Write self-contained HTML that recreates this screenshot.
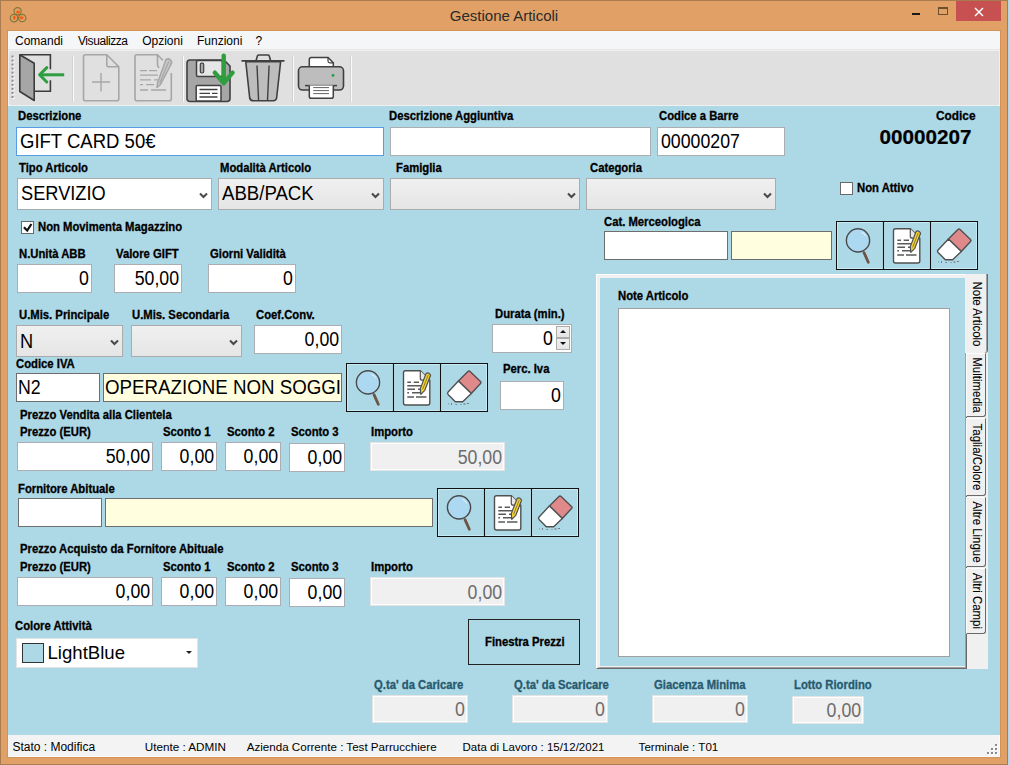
<!DOCTYPE html>
<html><head><meta charset="utf-8">
<style>
*{margin:0;padding:0;box-sizing:border-box}
html,body{width:1009px;height:765px;overflow:hidden;background:#B0D8EA;font-family:"Liberation Sans",sans-serif}
.a{position:absolute}
.frame{position:absolute;left:0;top:0;width:1008px;height:765px;background:#E0A066;border:1px solid #A97B50}
.title{position:absolute;left:0;top:7.2px;width:1008px;text-align:center;font-size:15px;color:#2b2b2b;line-height:18px}
.client{position:absolute;left:8px;top:31px;width:992px;height:726px;background:#ADD8E6}
.menubar{position:absolute;left:8px;top:31px;width:992px;height:19px;background:#F5F6F7;border-bottom:1px solid #E6E7E9}
.menubar span{position:absolute;top:0px;font-size:12px;line-height:12px;color:#000;top:3.6px}
.toolbar{position:absolute;left:8px;top:50px;width:992px;height:56px;background:#F0F0F0}
.tb{position:absolute;left:1px;top:1px;width:990px;height:54px;background:#E0E0E0;border-radius:3px 0 0 3px}
.sep{position:absolute;top:56px;width:1px;height:45px;background:#fff;border-left:1px solid #C8C8C8}
.lbl{position:absolute;font-weight:bold;font-size:12px;line-height:11.2px;white-space:nowrap;color:#000;transform:scaleX(0.94);transform-origin:0 0;-webkit-text-stroke:0.3px #000}
.teal{-webkit-text-stroke:0.3px #285A6E}
.in{position:absolute;background:#fff;border:1px solid #ABADB3;font-size:18px;line-height:18px;white-space:nowrap;overflow:hidden;color:#000}
.in span{position:absolute;top:4.3px;font-size:19.6px;transform:scaleX(0.905)}
.in .r{right:2px;transform-origin:100% 50%}
.in .l{left:3px;transform-origin:0 50%}
.yl{background:#FFFFE0}
.dis{background:#F0F0F0;border:1px solid #E4E4E4;box-shadow:inset 0 0 0 1px #fff;color:#6D6D6D}
.cb{position:absolute;background:#fff;border:1px solid #ABABAB;font-size:18px;line-height:18px;white-space:nowrap}
.cbg{background:linear-gradient(#F0F0F0,#E5E5E5)}
.cb span{position:absolute;left:3px;top:6px}
.chev{position:absolute;right:3px;top:12.6px;width:9px;height:7px}
.btn3{position:absolute;border:1px solid #1a1a1a;height:49px}
.btn3 .d{position:absolute;top:0;width:1px;height:47px;background:#1a1a1a}
.chk{position:absolute;width:13px;height:13px;background:#fff;border:1px solid #6A6A6A}
.status{position:absolute;left:8px;top:735px;width:992px;height:22px;background:#F3F3F3;border-right:1px solid #FAFCFE;border-bottom:1px solid #FAFCFE}
.status span{position:absolute;top:6.1px;font-size:11.6px;line-height:12px;color:#000;white-space:nowrap}
.teal{color:#285A6E}
.tab{position:absolute;background:#F0F0F0;border-top:1px solid #fff;border-right:1px solid #696969;border-bottom:1px solid #696969;border-left:1px solid #fff;border-radius:0 0 3px 0}
.tab span{position:absolute;left:50%;top:50%;transform:translate(-50%,-50%) translate(1px,0) rotate(90deg) scaleX(0.88);font-size:13px;line-height:12px;white-space:nowrap;color:#000;-webkit-text-stroke:0.1px #000}
.act{border-left:none;border-top:none;border-right:1px solid #696969;box-shadow:inset -1px 0 0 #A0A0A0;border-bottom:none}
</style></head><body>
<div class="frame"></div>
<svg width="0" height="0" style="position:absolute">
 <defs>
  <g id="bgrp">
   <rect x="0.5" y="0.5" width="141" height="48" fill="none" stroke="#111" stroke-width="1"/>
   <rect x="1.5" y="1.5" width="45.5" height="46" fill="none" stroke="#C6EAF3" stroke-width="1"/>
   <rect x="48.5" y="1.5" width="45" height="46" fill="none" stroke="#C6EAF3" stroke-width="1"/>
   <rect x="95.5" y="1.5" width="45" height="46" fill="none" stroke="#C6EAF3" stroke-width="1"/>
   <path d="M47.5 0V49M94.5 0V49" stroke="#111" stroke-width="1.2"/>
   <!-- magnifier -->
   <path d="M28 31.6L32.3 41.2" stroke="#6E5444" stroke-width="2.8" stroke-linecap="round"/>
   <circle cx="22" cy="19.4" r="11.6" fill="#ACD8F2" stroke="#4A4A4A" stroke-width="1.4"/>
   <path d="M25.5 11.2Q28.5 12.5 29.8 15.2" fill="none" stroke="#fff" stroke-width="1" opacity="0.8"/>
   <!-- doc -->
   <path d="M59.5 7.7H74.3L83.8 17.2V40Q83.8 42 81.8 42H59.5Q57.5 42 57.5 40V9.7Q57.5 7.7 59.5 7.7Z" fill="#fff" stroke="#505050" stroke-width="1.4"/>
   <path d="M74.3 7.7V15.2Q74.3 17.2 76.3 17.2H83.8" fill="#E8E8E8" stroke="#505050" stroke-width="1.2"/>
   <path d="M61.3 19.2H65M67.7 19.2H73M61.3 22.8H76M61.3 26.3H69M72 26.3H76M61.3 29.8H63M66 29.8H75M61.3 34H68M70 34H80.5" stroke="#5A5A5A" stroke-width="1.4"/>
   <path d="M80 10.7Q82.6 8.6 84.6 12.3L78.8 27.3L74.8 31.4L74.3 25.6Z" fill="#F2D23A" stroke="#505050" stroke-width="1.2" stroke-linejoin="round"/>
   <path d="M82.3 11.8L76.6 26.4" stroke="#7A6A30" stroke-width="0.8"/>
   <!-- eraser -->
   <path d="M17.9 17.9L27.4 8.6Q28.5 7.6 29.6 8.6L40 18.4Q41.1 19.5 40 20.6L30.8 30.4Z" transform="translate(94.5,0)" fill="#E0898A" stroke="#505050" stroke-width="1.4" stroke-linejoin="round"/>
   <path d="M17.9 17.9L30.8 30.4L22.2 38.7H14.8L7.6 31.4Q6.5 30.2 7.6 29Z" transform="translate(94.5,0)" fill="#fff" stroke="#505050" stroke-width="1.4" stroke-linejoin="round"/>
   <g fill="#666" transform="translate(94.5,0)"><rect x="7.5" y="40.5" width="0.8" height="0.8"/><rect x="10.5" y="40.2" width="1" height="1.5"/><rect x="15" y="41" width="1.5" height="0.8"/><rect x="20" y="41" width="1" height="0.8"/><rect x="23" y="40.5" width="2" height="1"/><rect x="26.5" y="40" width="2" height="0.8"/></g>
  </g>
 </defs>
</svg>
<div class="title">Gestione Articoli</div>
<!-- app icon -->
<svg class="a" style="left:0;top:0" width="30" height="28" viewBox="0 0 30 28">
 <g fill="none" stroke="#7D7A3C" stroke-width="1.2"><circle cx="17.6" cy="11.3" r="3.6"/><circle cx="14" cy="18.1" r="3.7"/><circle cx="22.2" cy="18" r="3.7"/></g>
 <g fill="#F06018"><ellipse cx="18" cy="12" rx="2" ry="1.6"/><ellipse cx="14.3" cy="17.8" rx="1.4" ry="2"/><ellipse cx="21.5" cy="17.8" rx="2" ry="1.5"/><circle cx="17.8" cy="16" r="1"/></g>
</svg>
<!-- window buttons -->
<div class="a" style="left:912px;top:13px;width:8px;height:2px;background:#1a1a1a"></div>
<div class="a" style="left:938px;top:7px;width:10px;height:8px;border:1px solid #6b5030;border-top:2px solid #6b5030"></div>
<div class="a" style="left:956px;top:1px;width:45px;height:20px;background:#C75050"></div>
<svg class="a" style="left:973px;top:5.5px" width="12" height="12" viewBox="0 0 12 12"><path d="M2 2L10 10M10 2L2 10" stroke="#fff" stroke-width="1.5"/></svg>

<div class="a" style="left:7px;top:30px;width:994px;height:728px;background:#D39358"></div>
<div class="client"></div>
<div class="menubar">
 <span style="left:7px">Comandi</span>
 <span style="left:70px;letter-spacing:-0.42px">Visualizza</span>
 <span style="left:134.2px">Opzioni</span>
 <span style="left:189px">Funzioni</span>
 <span style="left:247.6px">?</span>
</div>
<div class="toolbar"><div class="tb"></div></div>
<svg class="a" style="left:0;top:0" width="1009" height="110" viewBox="0 0 1009 110">
 <!-- grip -->
 <g><rect x="12.5" y="56.50" width="2" height="2" fill="#fff"/><rect x="11.5" y="55.50" width="2" height="2" fill="#8E8E8E"/><rect x="12.5" y="60.55" width="2" height="2" fill="#fff"/><rect x="11.5" y="59.55" width="2" height="2" fill="#8E8E8E"/><rect x="12.5" y="64.60" width="2" height="2" fill="#fff"/><rect x="11.5" y="63.60" width="2" height="2" fill="#8E8E8E"/><rect x="12.5" y="68.65" width="2" height="2" fill="#fff"/><rect x="11.5" y="67.65" width="2" height="2" fill="#8E8E8E"/><rect x="12.5" y="72.70" width="2" height="2" fill="#fff"/><rect x="11.5" y="71.70" width="2" height="2" fill="#8E8E8E"/><rect x="12.5" y="76.75" width="2" height="2" fill="#fff"/><rect x="11.5" y="75.75" width="2" height="2" fill="#8E8E8E"/><rect x="12.5" y="80.80" width="2" height="2" fill="#fff"/><rect x="11.5" y="79.80" width="2" height="2" fill="#8E8E8E"/><rect x="12.5" y="84.85" width="2" height="2" fill="#fff"/><rect x="11.5" y="83.85" width="2" height="2" fill="#8E8E8E"/><rect x="12.5" y="88.90" width="2" height="2" fill="#fff"/><rect x="11.5" y="87.90" width="2" height="2" fill="#8E8E8E"/><rect x="12.5" y="92.95" width="2" height="2" fill="#fff"/><rect x="11.5" y="91.95" width="2" height="2" fill="#8E8E8E"/><rect x="12.5" y="97.00" width="2" height="2" fill="#fff"/><rect x="11.5" y="96.00" width="2" height="2" fill="#8E8E8E"/></g>
 <!-- separators -->
 <g fill="#FAFAFA"><rect x="73" y="56" width="1" height="46"/><rect x="183" y="56" width="1" height="46"/><rect x="293" y="56" width="1" height="46"/><rect x="351" y="56" width="1" height="46"/></g><g fill="#D2D2D2"><rect x="72" y="56" width="1" height="46"/><rect x="182" y="56" width="1" height="46"/><rect x="292" y="56" width="1" height="46"/><rect x="350" y="56" width="1" height="46"/></g>
 <!-- door -->
 <path d="M19.8 54.8H50.4V69.2M50.4 80.2V91.3H34" fill="none" stroke="#3C3C3C" stroke-width="1.6"/>
 <path d="M19.8 54.8L34.2 63.2V100.5L19.8 91.5Z" fill="#A6A6A6" stroke="#3C3C3C" stroke-width="1.6" stroke-linejoin="round"/>
 <path d="M40 74.8H64.2" fill="none" stroke="#2E9E3E" stroke-width="3"/>
 <path d="M46.8 67.6L39.6 74.8L46.8 82" fill="none" stroke="#2E9E3E" stroke-width="3" stroke-linecap="round" stroke-linejoin="round"/>
 <!-- new doc -->
 <path d="M85.5 54.8H106.8L118.8 66.8V98.8Q118.8 100.8 116.8 100.8H85.5Q83.5 100.8 83.5 98.8V56.8Q83.5 54.8 85.5 54.8Z" fill="none" stroke="#A6A6A6" stroke-width="1.6"/>
 <path d="M106.8 54.8V64.8Q106.8 66.8 108.8 66.8H118.8" fill="none" stroke="#A6A6A6" stroke-width="1.6"/>
 <path d="M92 82H110M101 73V91.5" stroke="#A6A6A6" stroke-width="1.4"/>
 <!-- edit doc disabled -->
 <path d="M163 60.5L157.5 54.8H137Q135 54.8 135 56.8V98.8Q135 100.8 137 100.8H169.3Q171.3 100.8 171.3 98.8V73" fill="none" stroke="#A6A6A6" stroke-width="1.6"/>
 <path d="M157.5 54.8V64.5Q157.5 66 159 68" fill="none" stroke="#A6A6A6" stroke-width="1.6"/>
 <path d="M140 70.6H147M149 70.6H157M140 75.2H158M140 79.9H151M154 79.9H158M140 84.6H143M146 84.6H154M140 90H148M151 90H166" stroke="#A6A6A6" stroke-width="1.3"/>
 <path d="M166 59.5Q168.5 58 170.5 60Q172.5 62 171 64.5L160.5 84.5L157 87.5L157.5 83L166 59.5Z" fill="#C8C8C8" stroke="#A6A6A6" stroke-width="1.5" stroke-linejoin="round"/>
 <path d="M168.8 61.5L159.8 83" stroke="#A6A6A6" stroke-width="1.2"/>
 <!-- floppy -->
 <path d="M190 60H224L230 66V98.5Q230 101.5 227 101.5H190Q187 101.5 187 98.5V63Q187 60 190 60Z" fill="#A6A6A6" stroke="#404040" stroke-width="1.6"/>
 <rect x="196.5" y="60.5" width="26" height="16" rx="1.5" fill="#E6E6E6" stroke="#404040" stroke-width="1.5"/>
 <rect x="200.3" y="63.2" width="3.4" height="9.8" rx="1.5" fill="#A6A6A6" stroke="#404040" stroke-width="1.2"/>
 <rect x="196.2" y="85.5" width="24.8" height="15.5" rx="1" fill="#fff" stroke="#404040" stroke-width="1.5"/>
 <path d="M199.5 89.5H217.5M199.5 93.3H210M212 93.3H217.5M199.5 97H217.5" stroke="#404040" stroke-width="1.3"/>
 <path d="M223.7 55.6V82.5" stroke="#2E9E3E" stroke-width="4.4" stroke-linecap="round"/>
 <path d="M214.8 72.6L223.7 83.2L232.6 72.6" fill="none" stroke="#2E9E3E" stroke-width="4.4" stroke-linecap="round" stroke-linejoin="round"/>
 <!-- trash -->
 <path d="M245.8 61.8L249.7 98Q250.2 100.8 253.4 100.8H273.2Q276.2 100.8 276.6 98L280.6 61.8Z" fill="#BDBDBD" stroke="#404040" stroke-width="1.6" stroke-linejoin="round"/>
 <path d="M241.5 60.8H284.5" stroke="#404040" stroke-width="1.8"/>
 <path d="M256 60.8L257.5 55.8Q257.8 55 258.8 55H268Q269 55 269.2 55.8L270.6 60.8" fill="none" stroke="#404040" stroke-width="1.6"/>
 <path d="M257 65.5L258.6 100.5M269.1 65.5L267.5 100.5" stroke="#404040" stroke-width="1.4"/>
 <!-- printer -->
 <path d="M311.3 57.5H328L333.3 62.8V67H309.3V59.5Q309.3 57.5 311.3 57.5Z" fill="#fff" stroke="#404040" stroke-width="1.5"/>
 <path d="M328 57.5V61Q328 62.8 329.8 62.8H333.3" fill="none" stroke="#404040" stroke-width="1.2"/>
 <rect x="298.5" y="66.8" width="45" height="23.2" rx="4" fill="#BDBDBD" stroke="#404040" stroke-width="1.6"/>
 <path d="M305 85.6H337" stroke="#404040" stroke-width="1.5"/>
 <path d="M309.3 85.6V96.5Q309.3 98.3 311.3 98.3H331.3Q333.3 98.3 333.3 96.5V85.6" fill="#fff" stroke="#404040" stroke-width="1.5"/>
 <path d="M313.2 87.6H329M313.2 90.6H329M313.2 93.6H329" stroke="#505050" stroke-width="0.9"/>
 <circle cx="333" cy="75.4" r="1.4" fill="#1E9E3E"/>
</svg>

<!-- Row 1 -->
<div class="lbl" style="left:18px;top:110.5px">Descrizione</div>
<div class="in" style="left:16px;top:127px;width:368px;height:29px;border-color:#569DE5"><span class="l" style="transform:scaleX(0.945)">GIFT CARD 50€</span></div>
<div class="lbl" style="left:389px;top:110.5px">Descrizione Aggiuntiva</div>
<div class="in" style="left:390px;top:127px;width:261px;height:29px"></div>
<div class="lbl" style="left:659px;top:110.5px">Codice a Barre</div>
<div class="in" style="left:657px;top:127px;width:128px;height:29px"><span class="l">00000207</span></div>
<div class="lbl" style="left:936.3px;top:111.3px;font-size:12.6px;line-height:10.8px">Codice</div>
<div class="lbl" style="left:879.5px;top:127px;font-size:20.7px;line-height:20px;transform:none;-webkit-text-stroke:0.2px #000">00000207</div>

<!-- Row 2 -->
<div class="lbl" style="left:19px;top:162.5px">Tipo Articolo</div>
<div class="cb" style="left:17px;top:178px;width:195px;height:32px"><span style="font-size:19.6px;transform:scaleX(0.93);transform-origin:0 0;top:5.3px">SERVIZIO</span><svg class="chev" viewBox="0 0 9 7"><path d="M1 1.6L4.5 5.1L8 1.6" fill="none" stroke="#4A4A4A" stroke-width="2.1"/></svg></div>
<div class="lbl" style="left:220px;top:162.5px">Modalità Articolo</div>
<div class="cb cbg" style="left:218px;top:178px;width:166px;height:32px"><span style="font-size:19.6px;transform:scaleX(0.95);transform-origin:0 0;top:5.3px">ABB/PACK</span><svg class="chev" viewBox="0 0 9 7"><path d="M1 1.6L4.5 5.1L8 1.6" fill="none" stroke="#4A4A4A" stroke-width="2.1"/></svg></div>
<div class="lbl" style="left:396px;top:162.5px">Famiglia</div>
<div class="cb cbg" style="left:390px;top:178px;width:190px;height:32px"><svg class="chev" viewBox="0 0 9 7"><path d="M1 1.6L4.5 5.1L8 1.6" fill="none" stroke="#4A4A4A" stroke-width="2.1"/></svg></div>
<div class="lbl" style="left:590px;top:162.5px">Categoria</div>
<div class="cb cbg" style="left:586px;top:178px;width:190px;height:32px"><svg class="chev" viewBox="0 0 9 7"><path d="M1 1.6L4.5 5.1L8 1.6" fill="none" stroke="#4A4A4A" stroke-width="2.1"/></svg></div>
<div class="chk" style="left:840px;top:182px"></div>
<div class="lbl" style="left:857px;top:182.5px">Non Attivo</div>

<!-- Row 3 -->
<div class="chk" style="left:21px;top:221px"></div>
<svg class="a" style="left:23px;top:223px" width="10" height="10" viewBox="0 0 10 10"><path d="M0.9 4.3L4.2 7.5L8.4 1" fill="none" stroke="#111" stroke-width="2.2"/></svg>
<div class="lbl" style="left:38px;top:221.7px">Non Movimenta Magazzino</div>
<div class="lbl" style="left:604px;top:216.8px">Cat. Merceologica</div>
<div class="in" style="left:604px;top:231px;width:124px;height:29px;border-color:#6E6E6E"></div>
<div class="in yl" style="left:731px;top:231px;width:101px;height:29px;border-color:#6E6E6E"></div>
<svg class="a" style="left:836px;top:221px" width="142" height="49" viewBox="0 0 142 49"><use href="#bgrp"/></svg>

<div class="lbl" style="left:19px;top:248.9px">N.Unità ABB</div>
<div class="in" style="left:17px;top:264px;width:75px;height:29px"><span class="r">0</span></div>
<div class="lbl" style="left:116px;top:248.9px">Valore GIFT</div>
<div class="in" style="left:114px;top:264px;width:68px;height:29px"><span class="r">50,00</span></div>
<div class="lbl" style="left:210px;top:248.9px">Giorni Validità</div>
<div class="in" style="left:208px;top:264px;width:88px;height:29px"><span class="r">0</span></div>

<!-- U.Mis row -->
<div class="lbl" style="left:19px;top:309.8px">U.Mis. Principale</div>
<div class="cb cbg" style="left:16px;top:325px;width:107px;height:32px"><span style="top:6.3px;left:2.5px;font-size:19.6px;transform:scaleX(0.93);transform-origin:0 0">N</span><svg class="chev" viewBox="0 0 9 7"><path d="M1 1.6L4.5 5.1L8 1.6" fill="none" stroke="#4A4A4A" stroke-width="2.1"/></svg></div>
<div class="lbl" style="left:132px;top:309.8px">U.Mis. Secondaria</div>
<div class="cb cbg" style="left:131px;top:325px;width:111px;height:32px"><svg class="chev" viewBox="0 0 9 7"><path d="M1 1.6L4.5 5.1L8 1.6" fill="none" stroke="#4A4A4A" stroke-width="2.1"/></svg></div>
<div class="lbl" style="left:256px;top:309.8px">Coef.Conv.</div>
<div class="in" style="left:254px;top:325px;width:88px;height:29px"><span class="r">0,00</span></div>
<div class="lbl" style="left:495px;top:308.9px">Durata (min.)</div>
<div class="in" style="left:492px;top:324px;width:80px;height:29px"><span class="r" style="right:18px">0</span></div>
<div class="a" style="left:556px;top:326px;width:14px;height:12px;background:linear-gradient(#F0F0F0,#E5E5E5);border:1px solid #ACACAC"></div>
<div class="a" style="left:556px;top:338px;width:14px;height:12px;background:linear-gradient(#F0F0F0,#E5E5E5);border:1px solid #ACACAC"></div>
<div class="a" style="left:560px;top:330px;width:0;height:0;border-left:3px solid transparent;border-right:3px solid transparent;border-bottom:3.5px solid #111"></div>
<div class="a" style="left:560px;top:342px;width:0;height:0;border-left:3px solid transparent;border-right:3px solid transparent;border-top:3.5px solid #111"></div>

<!-- Codice IVA -->
<div class="lbl" style="left:16px;top:359.1px">Codice IVA</div>
<div class="in" style="left:16px;top:373px;width:84px;height:29px;border-color:#6E6E6E"><span class="l" style="left:1px">N2</span></div>
<div class="in yl" style="left:103px;top:373px;width:239px;height:29px;border-color:#6E6E6E"><span class="l" style="left:0.5px;transform:scaleX(0.955)">OPERAZIONE NON SOGGI</span></div>
<svg class="a" style="left:346px;top:363px" width="142" height="49" viewBox="0 0 142 49"><use href="#bgrp"/></svg>
<div class="lbl" style="left:503px;top:364px">Perc. Iva</div>
<div class="in" style="left:500px;top:381px;width:64px;height:29px"><span class="r">0</span></div>

<!-- Prezzo vendita -->
<div class="lbl" style="left:20px;top:410.2px">Prezzo Vendita alla Clientela</div>
<div class="lbl" style="left:20px;top:426.9px">Prezzo (EUR)</div>
<div class="lbl" style="left:163px;top:426.9px">Sconto 1</div>
<div class="lbl" style="left:227px;top:426.9px">Sconto 2</div>
<div class="lbl" style="left:291px;top:426.9px">Sconto 3</div>
<div class="lbl" style="left:371px;top:426.9px">Importo</div>
<div class="in" style="left:17px;top:442px;width:136px;height:29px"><span class="r">50,00</span></div>
<div class="in" style="left:161px;top:442px;width:56px;height:29px"><span class="r">0,00</span></div>
<div class="in" style="left:225px;top:442px;width:56px;height:29px"><span class="r">0,00</span></div>
<div class="in" style="left:289px;top:443px;width:56px;height:29px"><span class="r">0,00</span></div>
<div class="in dis" style="left:370px;top:442px;width:135px;height:29px"><span class="r" style="top:4.5px;right:1.5px">50,00</span></div>

<!-- Fornitore -->
<div class="lbl" style="left:18px;top:484.1px">Fornitore Abituale</div>
<div class="in" style="left:18px;top:498px;width:84px;height:29px;border-color:#6E6E6E"></div>
<div class="in yl" style="left:105px;top:498px;width:328px;height:29px;border-color:#6E6E6E"></div>
<svg class="a" style="left:437px;top:488px" width="142" height="49" viewBox="0 0 142 49"><use href="#bgrp"/></svg>

<!-- Prezzo acquisto -->
<div class="lbl" style="left:20px;top:544.1px">Prezzo Acquisto da Fornitore Abituale</div>
<div class="lbl" style="left:20px;top:562px">Prezzo (EUR)</div>
<div class="lbl" style="left:163px;top:562px">Sconto 1</div>
<div class="lbl" style="left:227px;top:562px">Sconto 2</div>
<div class="lbl" style="left:291px;top:562px">Sconto 3</div>
<div class="lbl" style="left:371px;top:562px">Importo</div>
<div class="in" style="left:17px;top:577px;width:136px;height:29px"><span class="r">0,00</span></div>
<div class="in" style="left:161px;top:577px;width:56px;height:29px"><span class="r">0,00</span></div>
<div class="in" style="left:225px;top:577px;width:56px;height:29px"><span class="r">0,00</span></div>
<div class="in" style="left:289px;top:578px;width:56px;height:29px"><span class="r">0,00</span></div>
<div class="in dis" style="left:370px;top:577px;width:135px;height:29px"><span class="r" style="top:4.5px;right:1.5px">0,00</span></div>

<!-- Colore -->
<div class="lbl" style="left:15px;top:620.9px">Colore Attività</div>
<div class="in" style="left:16px;top:638px;width:182px;height:30px;border-color:#E3E3E3"><div class="a" style="left:5px;top:4px;width:22px;height:20px;background:#ADD8E6;border:1px solid #333"></div><span style="left:30.5px;top:5.2px;font-size:18.6px;transform:none">LightBlue</span><div class="a" style="left:169px;top:12px;width:0;height:0;border-left:3.5px solid transparent;border-right:3.5px solid transparent;border-top:3.5px solid #222"></div></div>
<div class="a" style="left:468px;top:619px;width:112px;height:46px;border:1px solid #222"></div>
<div class="lbl" style="left:485px;top:636.6px">Finestra Prezzi</div>

<!-- Tab panel -->
<div class="a" style="left:596px;top:274px;width:371px;height:395px;background:#ADD8E6;border-left:1px solid #fff;border-top:1px solid #fff;border-right:1px solid #696969;border-bottom:1px solid #696969"></div>
<div class="a" style="left:597px;top:275px;width:369px;height:393px;border-left:3px solid #F0F0F0;border-top:3px solid #F0F0F0;border-right:1px solid #A0A0A0;border-bottom:1px solid #A0A0A0;box-shadow:inset 0 -1px 0 #F0F0F0"></div>
<div class="lbl" style="left:617.5px;top:290.6px">Note Articolo</div>
<div class="a" style="left:618px;top:308px;width:332px;height:349px;background:#fff;border:1px solid #A0A0A0"></div>
<div class="a" style="left:967px;top:275px;width:21px;height:394px;background:#F0F0F0"></div>
<div class="tab act" style="left:965px;top:274px;width:23px;height:79px"><span>Note Articolo</span></div>
<div class="tab" style="left:966px;top:353px;width:20px;height:64px"><span>Multimedia</span></div>
<div class="tab" style="left:966px;top:418px;width:20px;height:78px"><span>Taglia/Colore</span></div>
<div class="tab" style="left:966px;top:497px;width:20px;height:70px"><span>Altre Lingue</span></div>
<div class="tab" style="left:966px;top:568px;width:20px;height:66px"><span>Altri Campi</span></div>


<!-- Bottom qty -->
<div class="lbl teal" style="left:374px;top:679.9px">Q.ta' da Caricare</div>
<div class="in dis" style="left:372px;top:695px;width:96px;height:28px"><span class="r">0</span></div>
<div class="lbl teal" style="left:514px;top:679.9px">Q.ta' da Scaricare</div>
<div class="in dis" style="left:512px;top:695px;width:96px;height:28px"><span class="r">0</span></div>
<div class="lbl teal" style="left:654px;top:679.9px">Giacenza Minima</div>
<div class="in dis" style="left:652px;top:695px;width:96px;height:28px"><span class="r">0</span></div>
<div class="lbl teal" style="left:794px;top:679.9px">Lotto Riordino</div>
<div class="in dis" style="left:792px;top:696px;width:72px;height:28px"><span class="r">0,00</span></div>

<div class="status">
 <span style="left:4.4px;font-size:12px">Stato : Modifica</span>
 <span style="left:136.8px;font-size:11.7px">Utente : ADMIN</span>
 <span style="left:238.7px">Azienda Corrente : Test Parrucchiere</span>
 <span style="left:454.5px;font-size:11.5px">Data di Lavoro : 15/12/2021</span>
 <span style="left:630.6px">Terminale : T01</span>
</div>
<svg class="a" style="left:985px;top:742px" width="14" height="14" viewBox="985 742 14 14"><rect x="996" y="745" width="2" height="2" fill="#fff"/><rect x="995" y="744" width="2" height="2" fill="#8A8A8A"/><rect x="992" y="749" width="2" height="2" fill="#fff"/><rect x="991" y="748" width="2" height="2" fill="#8A8A8A"/><rect x="996" y="749" width="2" height="2" fill="#fff"/><rect x="995" y="748" width="2" height="2" fill="#8A8A8A"/><rect x="988" y="753" width="2" height="2" fill="#fff"/><rect x="987" y="752" width="2" height="2" fill="#8A8A8A"/><rect x="992" y="753" width="2" height="2" fill="#fff"/><rect x="991" y="752" width="2" height="2" fill="#8A8A8A"/><rect x="996" y="753" width="2" height="2" fill="#fff"/><rect x="995" y="752" width="2" height="2" fill="#8A8A8A"/></svg>
</body></html>
